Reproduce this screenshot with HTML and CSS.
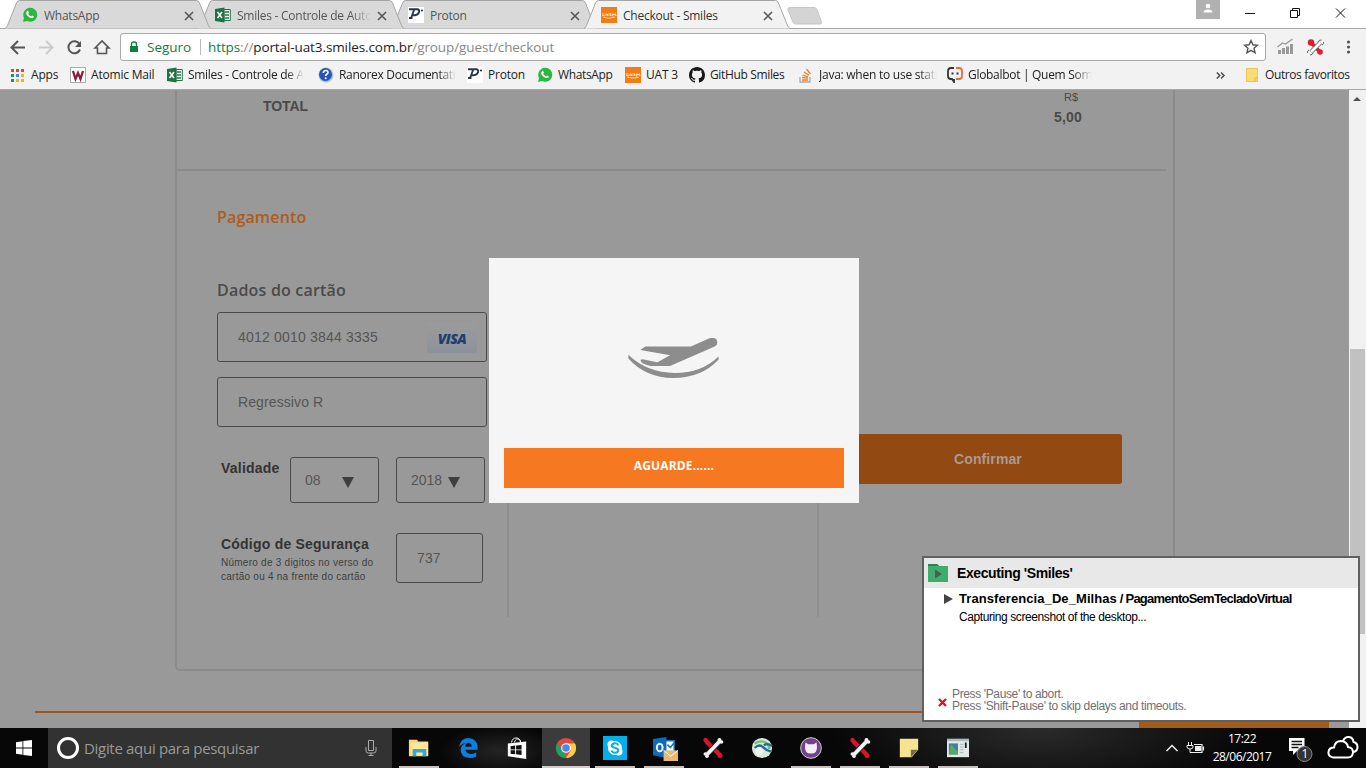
FILE: index.html
```html
<!DOCTYPE html>
<html lang="pt-BR">
<head>
<meta charset="utf-8">
<title>Checkout - Smiles</title>
<link rel="stylesheet" href="styles.css">
</head>
<body>
<svg class="defs" width="0" height="0">
  <symbol id="wa" viewBox="0 0 16 16"><path d="M1 15l1-4A7 7 0 1 1 5 14z" fill="#2cb742"/><path d="M5 4.2c.8-.8 1.300-.3 1.900 1.500l-.7 1c.6 1.300 1.500 2 2.900 2.700l1-1c1.600.6 2 1 1.500 1.900C10.500 12.600 4.200 9.500 4.200 6c0-.8.3-1.400.8-1.800z" fill="#fff"/></symbol>
  <symbol id="xl" viewBox="0 0 16 16"><path d="M9 2.500h6.300v11H9z" fill="#fff" stroke="#207245"/><path d="M10 5h4M10 8h4M10 11h4" stroke="#207245" stroke-width="1.500"/><path d="M0 2l9.500-1.500v15L0 14z" fill="#207245"/><path d="M2.500 5l4.500 6M7 5l-4.500 6" stroke="#fff" stroke-width="1.500"/></symbol>
  <symbol id="proton" viewBox="0 0 16 16"><path d="M0 0h16v16H0z" fill="#fff"/><path d="M1 2.300h8.500q2.300.4 1.500 3T7 8.300H4.500M6 3L3 11.500M1 11h3.500" fill="none" stroke="#2b3548" stroke-width="1.900"/><circle cx="14" cy="3.500" r="1.100" fill="#2b3548"/></symbol>
  <symbol id="smiles" viewBox="0 0 16 16"><path d="M0 0h16v16H0z" fill="#f57c14"/><path d="M1 7h2.500M1 8.500h2.500v1M5 7v2M5 7h1.500v2M8 6v3M9.500 6v3M11 8h1.500V7H11v2h1.500M15 7h-1.500v1H15v1M2 10.300q6 1.500 12 0" fill="none" stroke="#ffe2c4" stroke-width=".9"/></symbol>
  <symbol id="x" viewBox="0 0 10 10"><path d="M1 1l8 8M9 1L1 9" stroke="#555" stroke-width="1.600"/></symbol>
  <symbol id="tab" viewBox="0 0 206 29"><path d="M0 28.500Q1.500 28 2.500 25.500L11.500 3Q12.500.5 14.500.5H191.500Q193.500.5 194.500 3L203.500 25.500Q204.500 28 206 28.500" stroke="#a5a5a5"/></symbol>
  <symbol id="ranorex" viewBox="0 0 22 22"><path d="M4 4l14 14" stroke="#d8142b" stroke-width="4.500"/><circle cx="3.500" cy="3" r="2.200" fill="#d8142b"/><circle cx="18" cy="18.500" r="2.500" fill="#d8142b"/><path d="M17.500 4.500L5 17.500" stroke="#222" stroke-width="5.500"/><path d="M17.500 4.500L5 17.500" stroke="#f4f4f4" stroke-width="3.800"/><circle cx="17.500" cy="3" r="2" fill="#f4f4f4"/><circle cx="19.500" cy="5" r="1.800" fill="#f4f4f4"/><circle cx="3.300" cy="17" r="1.800" fill="#f4f4f4"/><circle cx="5" cy="19.300" r="1.800" fill="#f4f4f4"/></symbol>
</svg>
<header class="browser">
  <div class="tabs">
    <div class="tab"><svg class="shape"><use href="#tab"/></svg><svg class="ico"><use href="#wa"/></svg><span>WhatsApp</span><svg class="close"><use href="#x"/></svg></div>
    <div class="tab"><svg class="shape"><use href="#tab"/></svg><svg class="ico"><use href="#xl"/></svg><span class="fade">Smiles - Controle de Auto</span><svg class="close"><use href="#x"/></svg></div>
    <div class="tab"><svg class="shape"><use href="#tab"/></svg><svg class="ico"><use href="#proton"/></svg><span>Proton</span><svg class="close"><use href="#x"/></svg></div>
    <div class="tab active"><svg class="shape"><use href="#tab"/></svg><svg class="ico"><use href="#smiles"/></svg><span>Checkout - Smiles</span><svg class="close"><use href="#x"/></svg></div>
    <svg class="newtab" viewBox="0 0 36 18"><path d="M3 .5H27Q29 .5 30 2.500L34.500 15Q35 17 33 17H9Q7 17 6 15L.8 2.500Q.5.500 3 .5z" fill="#d4d4d4" stroke="#c6c6c6"/></svg>
    <div class="window-controls">
      <svg class="user" viewBox="0 0 24 19"><path d="M0 0h24v19H0z" fill="#b1b1b1"/><circle cx="12" cy="6" r="2.300" fill="#fff"/><path d="M7.500 12.500q0-3 4.500-3t4.500 3z" fill="#fff"/></svg>
      <svg class="buttons" viewBox="0 0 104 26"><path d="M0 13.500h10M45.500 10.500h7v7h-7zM47.500 10.500v-2h7v7h-2M91 8.500l9 9M100 8.500l-9 9" fill="none" stroke="#111"/></svg>
    </div>
  </div>
  <div class="toolbar">
    <svg class="nav" viewBox="0 0 120 32" fill="none" stroke="#555" stroke-width="2"><path d="M25 18.500H12.500M18 12l-6.500 6.500L18 25"/><path d="M39 18.500h12.500M46 12l6.500 6.500L46 25" stroke="#ccc"/><path d="M79.500 15A6 6 0 1 0 80 20.500"/><path d="M81 12v6h-6z" fill="#555" stroke="none"/><path d="M95 19l7-7 7 7h-2.500v5.500h-9V19z" stroke-width="1.600"/></svg>
    <div class="omnibox">
      <svg class="lock" viewBox="0 0 10 12"><path d="M1 5h8v6H1z" fill="#0b8043"/><path d="M2.500 5V3q0-2 2.500-2t2.500 2v2" fill="none" stroke="#0b8043" stroke-width="1.400"/></svg>
      <span class="secure">Seguro</span>
      <span class="url"><i class="https">https</i>://<b>portal-uat3.smiles.com.br</b>/group/guest/checkout</span>
      <svg class="star" viewBox="0 0 16 16"><path d="M8 1.500l1.900 4.300 4.600.4-3.500 3.100 1.100 4.600L8 11.400l-4.100 2.500L5 9.300 1.500 6.200l4.600-.4z" fill="none" stroke="#555" stroke-width="1.400"/></svg>
    </div>
    <svg class="extensions" viewBox="0 0 100 32"><path d="M12 22h3v4h-3zM16 20h3v6h-3zM20 18.500h3V26h-3zM24 16h3v10h-3z" fill="#999"/><path d="M11.500 19l5-4 3 1 7-5" fill="none" stroke="#999" stroke-width="1.300"/><path d="M45 14.500l9 9.500" stroke="#d9212b" stroke-width="3.500"/><circle cx="45" cy="14.500" r="3.200" fill="#d9212b"/><circle cx="54" cy="24" r="2.800" fill="#d9212b"/><path d="M54.500 14.500L45 24" stroke="#666" stroke-width="4.500"/><path d="M54.500 14.500L45 24" stroke="#fff" stroke-width="2.800"/><path d="M52 14q1-2.500 3.500-2M56 17q2.500-1 1.500-3M43 22q-2 .5-1.500 3M44 27q2.500 0 3-2" fill="none" stroke="#666"/><g fill="#555"><circle cx="82.500" cy="14" r="1.600"/><circle cx="82.500" cy="19" r="1.600"/><circle cx="82.500" cy="24" r="1.600"/></g></svg>
  </div>
  <nav class="bookmarks">
    <div><svg class="ico" viewBox="0 0 16 16"><path d="M1 2h3v3H1zM6 2h3v3H6zM11 2h3v3h-3z" fill="#db4437"/><path d="M1 7h3v3H1z" fill="#0f9d58"/><path d="M6 7h3v3H6z" fill="#4285f4"/><path d="M11 7h3v3h-3zM6 12h3v3H6zM11 12h3v3h-3z" fill="#f4b400"/><path d="M1 12h3v3H1z" fill="#0f9d58"/></svg><span>Apps</span></div>
    <div><svg class="ico" viewBox="0 0 16 16"><path d="M.5.5h15v15H.5z" fill="#fff" stroke="#aaa"/><path d="M3 4l2.500 8L8 6l2.500 6L13 4" fill="none" stroke="#8c1c3c" stroke-width="2.300"/></svg><span>Atomic Mail</span></div>
    <div><svg class="ico"><use href="#xl"/></svg><span class="fade">Smiles - Controle de A</span></div>
    <div><svg class="ico" viewBox="0 0 16 16"><circle cx="8" cy="8" r="7.500" fill="#aac0e5"/><circle cx="7.500" cy="7.500" r="6.500" fill="#2455b8"/><path d="M5.300 6q.2-2.500 2.500-2.500T10 5.500q0 1-1.200 1.700T7.700 9" fill="none" stroke="#fff" stroke-width="1.600"/><circle cx="7.700" cy="11.300" r="1" fill="#fff"/></svg><span class="fade">Ranorex Documentati</span></div>
    <div><svg class="ico"><use href="#proton"/></svg><span>Proton</span></div>
    <div><svg class="ico"><use href="#wa"/></svg><span class="tight">WhatsApp</span></div>
    <div><svg class="ico"><use href="#smiles"/></svg><span>UAT 3</span></div>
    <div><svg class="ico" viewBox="0 0 16 16"><path fill="#191717" d="M8 0C3.580 0 0 3.580 0 8c0 3.540 2.290 6.530 5.470 7.590.4.070.55-.17.55-.38 0-.19-.01-.82-.01-1.490-2.010.37-2.530-.49-2.690-.94-.09-.23-.48-.94-.82-1.130-.28-.15-.68-.52-.01-.53.63-.01 1.080.58 1.230.82.72 1.210 1.870.87 2.330.66.07-.52.28-.87.510-1.070-1.780-.2-3.640-.89-3.640-3.950 0-.87.31-1.590.82-2.150-.08-.2-.36-1.020.08-2.120 0 0 .67-.21 2.200.82.64-.18 1.320-.27 2-.27s1.360.09 2 .27c1.530-1.040 2.200-.82 2.200-.82.44 1.100.16 1.920.08 2.120.51.560.82 1.270.82 2.150 0 3.070-1.870 3.750-3.650 3.950.29.25.54.73.54 1.480 0 1.070-.01 1.930-.01 2.200 0 .21.15.46.55.38A8 8 0 0 0 16 8c0-4.420-3.580-8-8-8z"/></svg><span class="tight">GitHub Smiles</span></div>
    <div><svg class="ico" viewBox="0 0 16 16" fill="none"><path d="M2 10v5h10v-5" stroke="#aaa" stroke-width="1.300"/><path d="M4 13h6M4 10.500l6 .6M4.500 8l5.500 1.800M6 5l5 3.200M8.500 2l4 5" stroke="#f48024" stroke-width="1.300"/></svg><span class="fade java">Java: when to use stati</span></div>
    <div><svg class="ico" viewBox="0 0 16 16" fill="none" stroke-width="1.800"><path d="M7 1H4Q1 1 1 4v5q0 3 3 3h1l2 3v-3" stroke="#333"/><path d="M9 1h3q3 0 3 3v5q0 3-3 3H9" stroke="#f26a35"/><path d="M4.500 6.500h2M9.500 6.500h2" stroke="#333"/></svg><span class="fade">Globalbot | Quem Som</span></div>
    <div class="more"><svg width="9" height="7" viewBox="0 0 9 7"><path d="M.8.5l3 3-3 3M5 .5l3 3-3 3" fill="none" stroke="#444" stroke-width="1.400"/></svg></div>
    <div class="others"><svg class="ico" viewBox="0 0 16 16"><path d="M1.500 1.500h11v13h-11z" fill="#fbdc74" stroke="#e8c558"/><path d="M10 14v-3h2.500" fill="none" stroke="#e0b73e"/></svg><span>Outros favoritos</span></div>
  </nav>
</header>
<main class="viewport">
  <div class="page">
    <div class="card">
      <section class="total"><strong class="total-label">TOTAL</strong><div class="amount"><small>R$</small><b>5,00</b></div></section>
      <h2>Pagamento</h2>
      <div class="columns">
        <form class="payment">
          <h3>Dados do cartão</h3>
          <div class="field number"><span>4012 0010 3844 3335</span><em class="visa">VISA</em></div>
          <div class="field name"><span>Regressivo R</span></div>
          <div class="expiry"><label>Validade</label><div class="select">08<i></i></div><div class="select year">2018<i></i></div></div>
          <div class="security"><div><label>Código de Segurança</label><p>Número de 3 digitos no verso do<br>cartão ou 4 na frente do cartão</p></div><div class="field cvv">737</div></div>
        </form>
        <div class="middle"></div>
        <div class="confirm"><div class="confirm-button">Confirmar</div></div>
      </div>
    </div>
    <div class="footer"><div class="footer-button"></div></div>
    <div class="modal">
      <svg class="plane" viewBox="114 83 273 121" fill="#8d8d8d"><path d="M150 119l15-10H303L356 85Q374 79 381 88 387 103 375 109L240 168H181Q149 160 151 149 157 146 164 149L202 156 240 135z"/><path d="M114 134Q170 188 255 189 335 189 387 139v9Q335 204 250 204 165 203 114 145z"/></svg>
      <div class="wait">AGUARDE......</div>
    </div>
  </div>
  <div class="scrollbar"><i class="up"></i><div class="thumb"></div></div>
</main>
<footer class="taskbar">
  <div class="start"><svg viewBox="0 0 16 16" width="16" height="16" fill="#fff"><path d="M0 2.200l6.500-.9v6.300H0zM7.300 1.100L16 0v7.600H7.300zM0 8.400h6.500v6.300L0 13.800zM7.300 8.400H16V16l-8.700-1.100z"/></svg></div>
  <div class="search"><span class="cortana"></span><span class="search-text">Digite aqui para pesquisar</span><svg width="14" height="18" viewBox="0 0 14 18" fill="none" stroke="#aaa"><path d="M4.500 1.500h5v10h-5zM2 8v4q0 2 2.500 2h5q2.500 0 2.500-2V8M7 14v2.500M4.500 16.500h5"/></svg></div>
  <div class="apps">
    <div class="open"><svg viewBox="0 0 24 24"><path d="M1 3h9l1 2h11v16H1z" fill="#f8d775"/><path d="M3 6h19v14H3z" fill="#fce79b"/><path d="M5 13h15v8h-4v-4H9v4H5z" fill="#37a6d9"/></svg></div>
    <div><svg viewBox="0 0 24 24"><path d="M2 11Q4 1 13 1q9 1 9.500 10v3H9q1 4.500 6 4.500 3 0 6-1.700v4.500Q18 23 14 23 4 22.500 4 14q0-5 6-7.500Q5 7 2 11zM9 10.500h7q0-4-3.500-4T9 10.500z" fill="#0a80dc"/></svg></div>
    <div><svg viewBox="0 0 24 24"><path d="M6 6Q7 1 11 1t5 5M9 6q2-6 6-3 1 1 1 3" fill="none" stroke="#fff"/><path d="M2 7l20-2v19L2 21z" fill="#fff"/><path d="M5 10l5-.6v4.100H5zM11 9.300l6-.7v4.900h-6zM5 14.500h5v4.200l-5-.5zM11 14.500h6v5l-6-.6z" fill="#111"/></svg></div>
    <div class="current"><svg viewBox="0 0 24 24"><circle cx="12" cy="12" r="11" fill="#dd4b3e"/><path d="M2.500 6.500L8 15l5 7.900A11 11 0 0 1 2.500 6.500z" fill="#1ca261"/><path d="M12 7h9.800A11 11 0 0 1 12 23l5-8z" fill="#ffce44"/><circle cx="12" cy="12" r="5.300" fill="#fff"/><circle cx="12" cy="12" r="4.100" fill="#4a87ee"/></svg></div>
    <div class="open skype"><svg viewBox="0 0 24 24"><path d="M0 0h24v24H0z" fill="#00aff0"/><circle cx="12" cy="12" r="7" fill="#fff"/><circle cx="8.500" cy="8.500" r="4" fill="#fff"/><circle cx="15.500" cy="15.500" r="4" fill="#fff"/><path d="M15.300 9.300q-.8-2-3.300-2T8.700 9.500q0 1.700 3.300 2.400 3.500.7 3.300 2.600-.3 2.200-3.300 2.200-2.800 0-3.600-2.200" fill="none" stroke="#00aff0" stroke-width="1.900"/></svg></div>
    <div class="open outlook"><svg viewBox="0 0 26 26"><path d="M10 5h12v12H10z" fill="#fff" stroke="#1575c5" stroke-width="1.500"/><path d="M15 9l3 3 4-5" fill="none" stroke="#1575c5" stroke-width="1.700"/><path d="M0 3l14-2v22L0 20z" fill="#0c6bbb"/><ellipse cx="7" cy="12" rx="3" ry="4" fill="none" stroke="#fff" stroke-width="2"/><path d="M11 15h15v11H11z" fill="#e9b873"/><path d="M11 15l7.500 6 7.500-6" fill="none" stroke="#fff"/></svg></div>
    <div><svg viewBox="0 0 22 22"><use href="#ranorex"/></svg></div>
    <div><svg viewBox="0 0 24 24"><circle cx="12" cy="12" r="11" fill="#d9e7dc"/><path d="M4 7q7-4 12-1 4 3 4 7" fill="none" stroke="#7bbb78" stroke-width="2.500"/><path d="M4 12q5-5 9-1t9 5M14 9q4-3 9 1" fill="none" stroke="#1e6d9c" stroke-width="2.500"/><circle cx="9" cy="15.500" r="4.500" fill="#eef3f0"/></svg></div>
    <div class="open"><svg viewBox="0 0 24 24"><circle cx="12" cy="12" r="11.300" fill="#70458b" stroke="#ddd"/><path d="M6 6l3 2h6l3-2 .5 4q.8 8-6.500 8T5.500 10z" fill="#f5eefa"/></svg></div>
    <div class="open"><svg viewBox="0 0 22 22"><use href="#ranorex"/></svg></div>
    <div class="open"><svg viewBox="0 0 24 24"><path d="M2 2h20v12l-7 8H2z" fill="#f7e491"/><path d="M14 14h8l-8 8z" fill="#756b49"/></svg></div>
    <div class="open"><svg viewBox="0 0 24 24"><path d="M0 2h24v20H0z" fill="#e4e8e8"/><path d="M0 2h24v2.500H0z" fill="#a9bbc3"/><path d="M2 7h10v12H2z" fill="#437e9b"/><path d="M4 8l8 8v3H2z" fill="#59a76a"/><path d="M14 8h4M14 11h4M14 14h4M14 17h4" stroke="#a3b0b6"/><path d="M20.500 6v6" stroke="#222" stroke-width="2"/></svg></div>
  </div>
  <div class="tray">
    <svg width="46" height="24" viewBox="0 0 46 24" fill="none" stroke="#eee"><path d="M1.500 15L7 9.500l5.500 5.500" stroke-width="1.500"/><path d="M29 8.500h8v8h-9M38.500 10.500v4" stroke-width="1.200"/><path d="M30 10h6v5h-6z" fill="#eee" stroke="none"/><path d="M23.500 6v3M26.500 6v3M22 9.500h6v1.500q0 2-3 2t-3-2zM25 13v3.500h3"/></svg>
    <div class="clock"><span>17:22</span><span>28/06/2017</span></div>
    <svg class="notify" width="28" height="30" viewBox="0 0 28 30"><path d="M0 4h15.500v13H8l-4 4v-4H0z" fill="#fff"/><path d="M2.500 7.500h10.500M2.500 10.500h10.500M2.500 13.500h7" stroke="#111" stroke-width="1.300"/><circle cx="15.500" cy="20" r="7.500" fill="#333" stroke="#888"/><text x="12.600" y="24.300" fill="#fff" font-family="Open Sans" font-size="12">1</text></svg>
    <svg class="cloud" width="32" height="26" viewBox="0 0 32 26" fill="none" stroke="#fff" stroke-width="2"><path d="M6 22.500Q1 21.500 1.500 17 2 12.500 7 12.500 8 6 14 6q6 .3 7 6 5 .5 5 5.500-.5 5-5 5H6M16 6q2-4.500 6-4 4 .5 4.500 5 4 1 4 5 0 4-4 5"/></svg>
  </div>
</footer>
<aside class="toast">
  <div class="toast-head"><svg width="20" height="18" viewBox="0 0 20 18"><path d="M0 0h9l2 2h9v16H0z" fill="#3fae6c"/><path d="M0 0h9l2 2H0z" fill="#278453"/><path d="M7 5.500l7 4.500-7 4.500z" fill="#4d5d50"/></svg><b>Executing 'Smiles'</b></div>
  <div class="toast-item"><i></i><div><b><span class="step">Transferencia_De_Milhas</span><span class="sub"> / PagamentoSemTecladoVirtual</span></b><p>Capturing screenshot of the desktop...</p></div></div>
  <div class="toast-help"><svg width="9" height="9" viewBox="0 0 9 9"><path d="M1 1l7 7M8 1L1 8" stroke="#d01c2a" stroke-width="2.400"/></svg><p>Press 'Pause' to abort.<br>Press 'Shift-Pause' to skip delays and timeouts.</p></div>
</aside>
</body>
</html>
```
FILE: styles.css
```css
* { box-sizing: border-box; }
body { margin: 0; width: 1366px; height: 768px; overflow: hidden; display: flex; flex-direction: column; font-family: "Liberation Sans", Arial, sans-serif; position: relative; }
h2, h3, p { margin: 0; }
i { font-style: normal; }
svg { display: block; flex: none; }
.defs { position: absolute; }
.ico { width: 16px; height: 16px; }

.browser { height: 90px; flex: none; background: #f2f2f2; border-bottom: 1px solid #a9a9a9; font: 12px "Open Sans", sans-serif; color: #333; }
.tabs { height: 29px; display: flex; padding-left: 5px; background: linear-gradient(#a8a8a8, #a8a8a8) bottom / 100% 1px no-repeat #fff; }
.tab { position: relative; isolation: isolate; width: 206px; height: 29px; margin-right: -13px; padding: 1px 17px 0; display: flex; align-items: center; gap: 6px; letter-spacing: -.25px; color: #555; z-index: 3; }
.tab:nth-child(2) { z-index: 2; }
.tab:nth-child(3) { z-index: 1; }
.tab.active { z-index: 4; color: #333; margin-right: 0; }
.tab .shape { position: absolute; inset: 0; width: 206px; height: 29px; z-index: -1; fill: #d9d9d9; }
.tab.active .shape { fill: #f2f2f2; }
.tab span { flex: 1; width: 132px; overflow: hidden; white-space: nowrap; }
.close { width: 10px; height: 10px; margin-top: 1px; }
.fade { -webkit-mask-image: linear-gradient(90deg, #000 85%, transparent); mask-image: linear-gradient(90deg, #000 85%, transparent); }
.newtab { width: 36px; height: 18px; margin: 7px 0 0 -3px; }
.window-controls { display: flex; margin-left: auto; padding-right: 17px; }
.user { width: 24px; height: 19px; margin-right: 25px; }
.buttons { width: 104px; height: 26px; }

.toolbar { display: flex; height: 32px; }
.nav { width: 120px; height: 32px; }
.omnibox { width: 1146px; height: 28px; margin-top: 4px; border: 1px solid #aaa; border-radius: 3px; background: #fff; display: flex; align-items: center; padding: 0 6px 0 8px; font-size: 13.500px; }
.lock { width: 10px; height: 12px; margin-right: 8px; }
.secure { color: #0b8043; width: 54px; border-right: 1px solid #bbb; height: 16px; display: flex; align-items: center; }
.url { margin-left: 7px; color: #888; letter-spacing: -.1px; }
.url b { color: #222; font-weight: 400; }
.https { color: #0b8043; }
.star { width: 16px; height: 16px; margin-left: auto; }
.extensions { width: 100px; height: 32px; margin-top: -1px; }

.bookmarks { display: grid; grid-template-columns: 60px 97px 151px 149px 70px 88px 64px 109px 149px 258px 31px 110px; padding-left: 10px; height: 27px; color: #222; letter-spacing: -.2px; }
.bookmarks > div { display: flex; align-items: center; gap: 5px; white-space: nowrap; }
.bookmarks .fade { min-width: 110px; letter-spacing: -.3px; }
.bookmarks .java { letter-spacing: -.25px; }
.bookmarks .tight { letter-spacing: -.35px; }
.bookmarks .more { padding: 2px 0 0 11px; }
.bookmarks .others { gap: 4px; letter-spacing: -.4px; margin-left: -1px; }
.bookmarks .others::before { content: ""; width: 1px; height: 16px; background: #c4c4c4; margin-right: 6px; }

.viewport { height: 638px; flex: none; display: flex; }
.page { width: 1349px; height: 638px; position: relative; background: #999; color: #4a4a4a; }
.card { width: 1000px; height: 581px; margin-left: 175px; border: 2px solid #8b8b8b; border-top: 0; border-radius: 0 0 5px 5px; }
.total { width: 989px; height: 81px; border-bottom: 2px solid #8b8b8b; display: flex; justify-content: space-between; padding: 0 84px 0 86px; }
.total-label { font-size: 14px; line-height: 16px; margin-top: 8px; letter-spacing: -.1px; }
.amount { display: flex; flex-direction: column; align-items: flex-end; }
.amount small { font-size: 11px; line-height: 14px; padding-right: 4px; }
.amount b { font-size: 14px; line-height: 20px; margin-top: 3px; letter-spacing: .2px; }
h2 { margin: 30px 0 0 40px; height: 33px; font: 600 16px/33px "Open Sans", sans-serif; letter-spacing: .15px; color: #ad5c1c; }
.columns { display: grid; grid-template-columns: 332px 310px 1fr; height: 347px; margin-top: 36px; }
.payment { border-right: 2px solid #8f8f8f; padding-left: 40px; }
h3 { font: 600 16px/40px "Open Sans", sans-serif; margin-bottom: 2px; letter-spacing: .2px; }
.field { width: 270px; height: 50px; border: 1px solid #4b4b4b; border-radius: 3px; padding: 0 9px 0 20px; display: flex; align-items: center; justify-content: space-between; font-size: 14px; color: #555; letter-spacing: .1px; }
.number span { letter-spacing: .2px; }
.name { margin-top: 15px; }
.visa { width: 50px; height: 30px; background: linear-gradient(#9b9b9c, #8d929b); display: flex; align-items: center; justify-content: center; font: italic 800 14px "Open Sans", sans-serif; letter-spacing: -.6px; color: #1d406e; margin-top: 2px; }
.expiry { display: flex; margin-top: 30px; height: 46px; }
label { color: #333; font-weight: 700; font-size: 14px; letter-spacing: .22px; line-height: 22px; padding-left: 4px; display: block; }
.expiry label { width: 73px; }
.select { width: 89px; height: 46px; border: 1px solid #4b4b4b; border-radius: 3px; padding-left: 14px; display: flex; align-items: center; font-size: 14px; color: #555; gap: 21px; }
.select i { border: 6px solid transparent; border-top: 11px solid #3f3f3f; border-bottom: 0; margin-top: 4px; }
.year { margin-left: 17px; gap: 6px; }
.security { display: flex; justify-content: space-between; margin-top: 30px; width: 266px; }
.security p { padding: 1px 0 0 4px; font-size: 10px; line-height: 14px; color: #3f3f3f; letter-spacing: .25px; white-space: nowrap; }
.cvv { width: 87px; }
.middle { border-right: 2px solid #8f8f8f; }
.confirm { padding-top: 164px; }
.confirm-button { width: 268px; height: 50px; margin-left: 35px; border-radius: 3px; background: #924912; color: #a99b92; font-size: 14px; font-weight: 700; line-height: 50px; text-align: center; letter-spacing: .1px; }
.footer { margin-left: 35px; width: 1294px; height: 17px; margin-top: 40px; border-top: 2px solid #a05619; display: flex; justify-content: flex-end; align-items: flex-end; }
.footer-button { width: 190px; height: 10px; background: #a05c1c; }

.modal { position: absolute; left: 489px; top: 168px; width: 370px; height: 245px; background: #f5f5f5; padding: 80px 15px 15px; display: flex; flex-direction: column; align-items: center; justify-content: space-between; }
.plane { width: 91px; height: 40px; margin-right: 1px; }
.wait { width: 340px; height: 40px; background: #f67921; color: #fff; font: 700 12px/36px "Open Sans", sans-serif; text-align: center; letter-spacing: .15px; }
.scrollbar { width: 17px; background: #f1f1f1; }
.up { display: block; width: 8px; height: 4px; border: 4px solid transparent; border-bottom-color: #505050; border-top: 0; margin: 7px 0 0 4px; }
.thumb { width: 15px; height: 285px; background: #c1c1c1; margin: 248px 0 0 1px; }

.taskbar { height: 40px; display: flex; background: radial-gradient(ellipse 210px 70px at 1040px 0, #2b2b2b, transparent), radial-gradient(ellipse 60px 25px at 500px 23px, #242424, transparent), #070707; color: #fff; font-family: "Open Sans", sans-serif; }
.start { width: 48px; display: grid; place-items: center; }
.search { width: 344px; background: #323232; color: #999; display: flex; align-items: center; padding: 0 14px 0 9px; font-size: 15px; letter-spacing: -.31px; }
.cortana { width: 22px; height: 22px; border: 3px solid #fff; border-radius: 50%; margin-right: 5px; }
.search svg { margin-left: auto; }
.apps { display: flex; gap: 1px; margin-left: 3px; }
.apps > div { width: 48px; height: 40px; display: grid; place-items: center; border-bottom: 2px solid transparent; }
.apps svg { width: 22px; height: 22px; margin-top: 2px; }
.apps .skype svg { width: 24px; height: 24px; }
.apps .outlook svg { width: 25px; height: 25px; margin-left: 3px; }
.apps .open { background: linear-gradient(#c9bfbc, #c9bfbc) center bottom / 40px 2px no-repeat border-box; }
.apps .current { background: #3b3b3b; border-bottom-color: #d3cbc8; }
.tray { margin-left: auto; display: flex; align-items: center; padding-right: 7px; }
.clock { width: 62px; display: flex; flex-direction: column; align-items: center; font-size: 12px; line-height: 18px; letter-spacing: -.5px; }
.notify { margin: 2px 0 0 16px; }
.cloud { margin-left: 10px; }

.toast { position: absolute; left: 922px; top: 556px; width: 438px; height: 166px; border: 2px solid #606060; background: #fff; color: #000; }
.toast-head { height: 30px; background: #e8e8e8; display: flex; align-items: center; gap: 9px; padding-left: 4px; font-size: 14px; letter-spacing: -.4px; }
.toast-item { display: flex; margin: 2px 0 0 20px; gap: 6px; white-space: nowrap; }
.toast-item i { border: 5px solid transparent; border-left: 9px solid #444; border-right: 0; height: 10px; margin-top: 4px; }
.toast-item b { display: block; font-size: 13px; line-height: 18px; }
.toast-item p { font-size: 12px; line-height: 18px; letter-spacing: -.41px; }
.step { letter-spacing: .08px; }
.sub { letter-spacing: -.76px; }
.toast-help { display: flex; margin: 62px 0 0 14px; gap: 5px; font-size: 12px; line-height: 12px; color: #707070; letter-spacing: -.37px; }
.toast-help svg { margin-top: 10px; }
```
